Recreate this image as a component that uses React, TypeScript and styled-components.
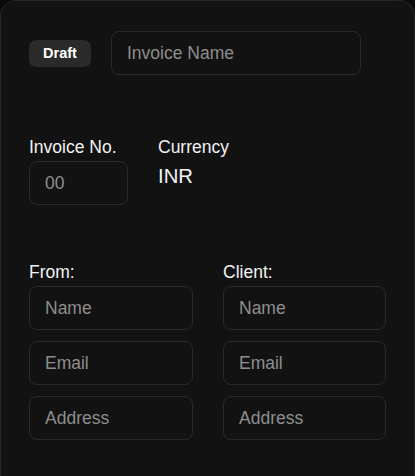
import React from "react";
import styled, { createGlobalStyle } from "styled-components";

const Global = createGlobalStyle`
  html, body { margin: 0; padding: 0; background: #0a0a0a; }
  body { font-family: "Liberation Sans", Arial, sans-serif; }
  * { box-sizing: border-box; }
`;

const Card = styled.div`
  width: 415px;
  min-height: 476px;
  background: #121212;
  border: 1px solid #262626;
  border-bottom: none;
  border-radius: 16px 16px 0 0;
  padding: 30px 28px 0 28px;
  color: #f2f2f2;
`;

const TopRow = styled.div`
  display: flex;
  align-items: center;
  gap: 20px;
`;

const Badge = styled.span`
  display: inline-flex;
  align-items: center;
  justify-content: center;
  width: 62px;
  height: 27px;
  border-radius: 7px;
  background: #2a2a2a;
  color: #fff;
  font-weight: 700;
  font-size: 14.5px;
`;

const Input = styled.input<{ $w?: number }>`
  width: ${(p) => (p.$w ? `${p.$w}px` : "100%")};
  height: 44px;
  background: #121212;
  border: 1px solid #2a2a2a;
  border-radius: 8px;
  padding: 0 15px;
  color: #f2f2f2;
  font-family: "Liberation Sans", Arial, sans-serif;
  font-size: 17.5px;
  outline: none;
  &::placeholder { color: #8e8e8e; }
`;

const MetaRow = styled.div`
  display: flex;
  gap: 30px;
  margin-top: 62px;
`;

const Field = styled.div`
  display: flex;
  flex-direction: column;
  gap: 4px;
`;

const Label = styled.label`
  font-size: 17.5px;
  line-height: 20px;
  color: #f2f2f2;
`;

const Value = styled.div`
  font-size: 20.3px;
  line-height: 23px;
  margin-top: 4px;
  color: #f2f2f2;
`;

const Parties = styled.div`
  display: grid;
  grid-template-columns: 164px 163px;
  column-gap: 30px;
  margin-top: 57px;
`;

const Column = styled.div`
  display: flex;
  flex-direction: column;
  gap: 11px;
`;

const ColumnHead = styled(Label)`
  margin-bottom: -7px;
`;

const Party = ({ title }: { title: string }) => (
  <Column>
    <ColumnHead>{title}</ColumnHead>
    <Input placeholder="Name" />
    <Input placeholder="Email" />
    <Input placeholder="Address" />
  </Column>
);

export default function App() {
  return (
    <>
      <Global />
      <Card>
        <TopRow>
          <Badge>Draft</Badge>
          <Input $w={250} placeholder="Invoice Name" />
        </TopRow>
        <MetaRow>
          <Field>
            <Label>Invoice No.</Label>
            <Input $w={99} placeholder="00" />
          </Field>
          <Field>
            <Label>Currency</Label>
            <Value>INR</Value>
          </Field>
        </MetaRow>
        <Parties>
          <Party title="From:" />
          <Party title="Client:" />
        </Parties>
      </Card>
    </>
  );
}
